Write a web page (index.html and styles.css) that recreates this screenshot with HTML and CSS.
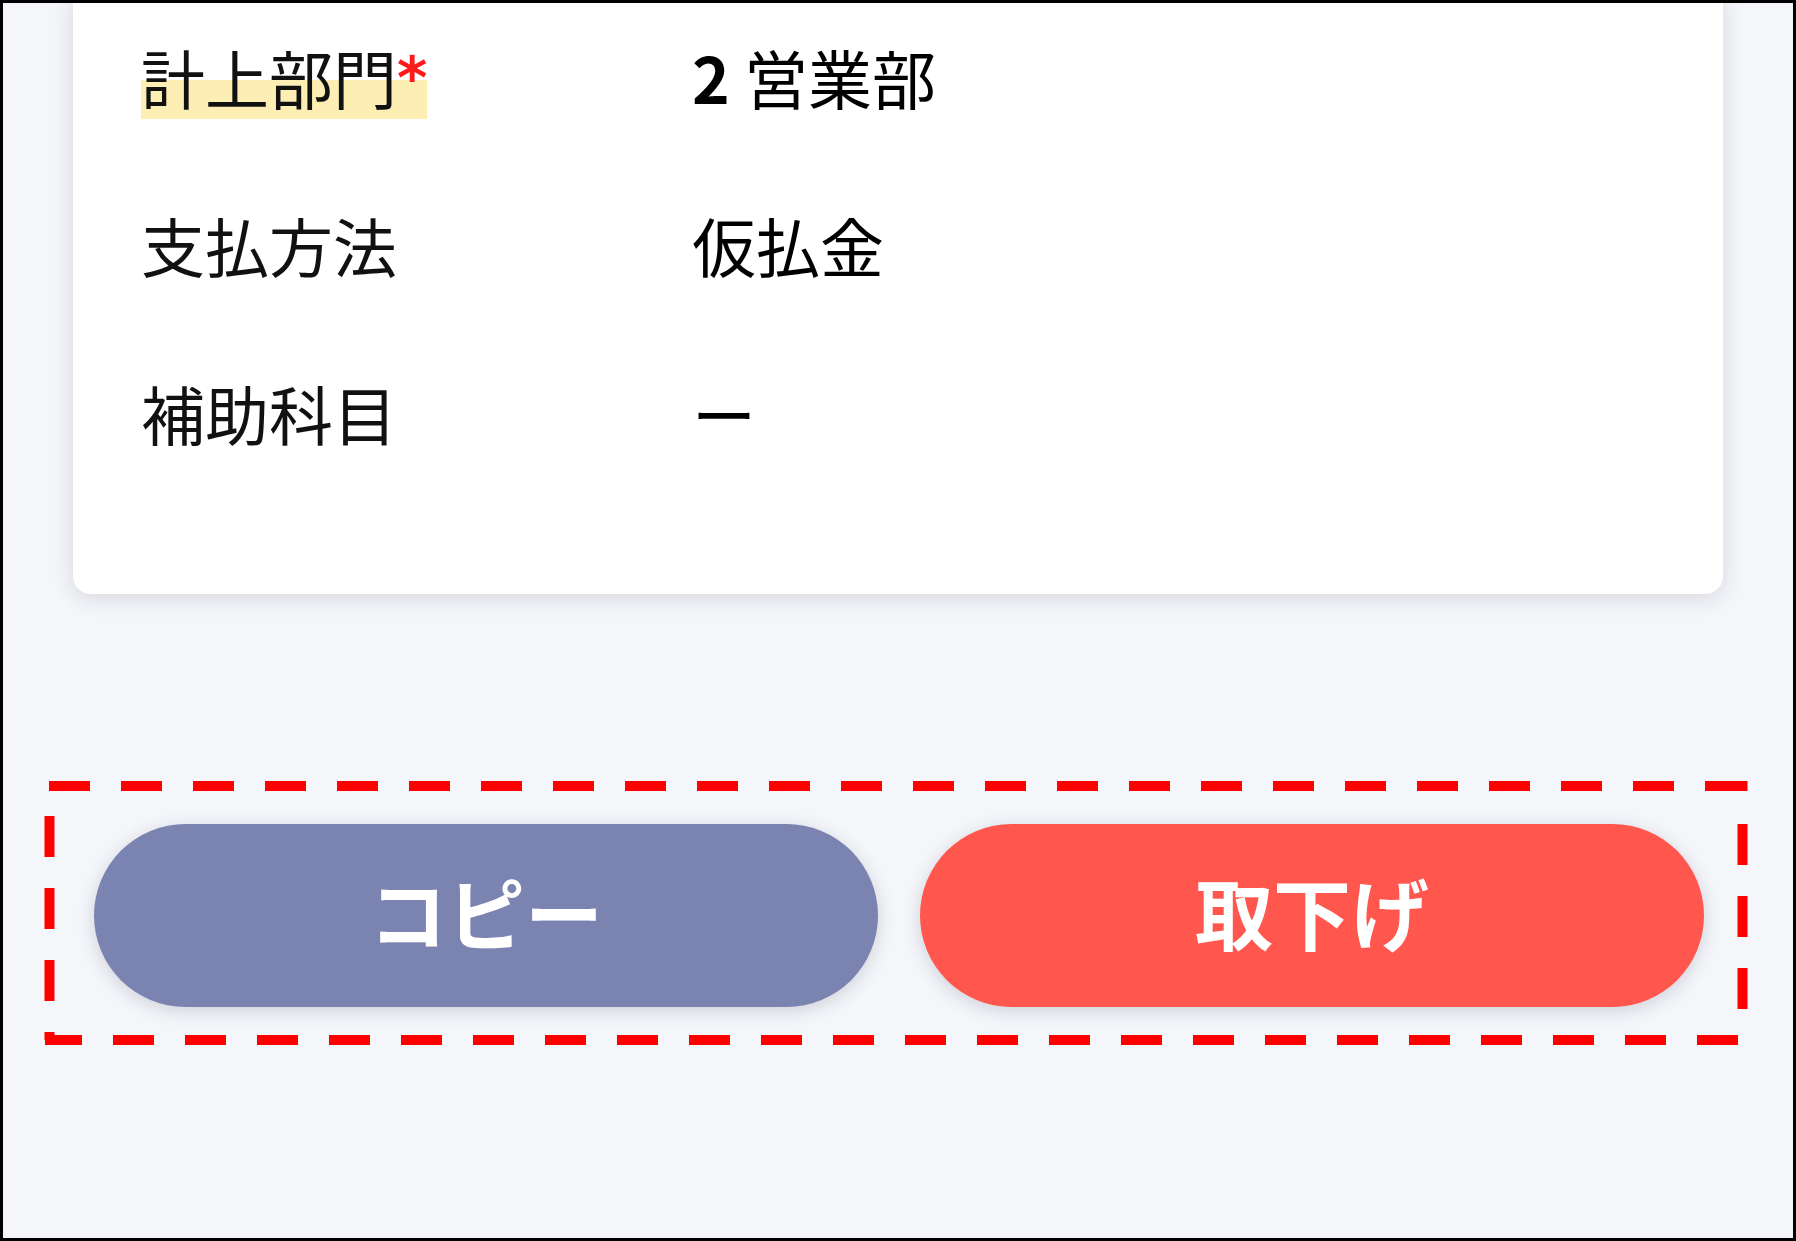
FILE: index.html
```html
<!DOCTYPE html>
<html lang="ja">
<head>
<meta charset="utf-8">
<title>詳細</title>
<link rel="stylesheet" href="styles.css">
</head>
<body>
<div class="frame">
  <section class="card">
    <div class="row">
      <div class="label"><span class="marker">計上部門<span class="req">*</span></span></div>
      <div class="value"><span class="code">2</span> 営業部</div>
    </div>
    <div class="row">
      <div class="label">支払方法</div>
      <div class="value">仮払金</div>
    </div>
    <div class="row">
      <div class="label">補助科目</div>
      <div class="value">ー</div>
    </div>
  </section>

  <div class="actions">
    <button class="btn btn-copy" type="button">コピー</button>
    <button class="btn btn-withdraw" type="button">取下げ</button>
  </div>

  <svg class="annotation" viewBox="0 0 1796 1241" width="1796" height="1241" aria-hidden="true">
    <g stroke="#ff0000" stroke-width="10" fill="none">
      <line x1="49" y1="786" x2="1747" y2="786" stroke-dasharray="41 31"/>
      <line x1="1742.5" y1="781" x2="1742.5" y2="791"/>
      <line x1="1742.5" y1="824" x2="1742.5" y2="1010" stroke-dasharray="41 31"/>
      <line x1="45" y1="1040" x2="1744" y2="1040" stroke-dasharray="41 31" stroke-dashoffset="4"/>
      <line x1="49.5" y1="816" x2="49.5" y2="1002" stroke-dasharray="41 31"/>
      <line x1="49.5" y1="1032" x2="49.5" y2="1040"/>
    </g>
  </svg>
</div>
</body>
</html>
```

FILE: styles.css
```css
* {
  box-sizing: border-box;
}

html, body {
  margin: 0;
  padding: 0;
}

body {
  width: 1796px;
  height: 1241px;
  overflow: hidden;
  font-family: "Noto Sans CJK JP", "Noto Sans", sans-serif;
  background: #ffffff;
}

.frame {
  position: relative;
  width: 1796px;
  height: 1241px;
  border: 3px solid #000000;
  background: #f5f6fa;
  overflow: hidden;
}

.card {
  margin: -11px 70px 0 70px;
  padding: 0 68px 98px 68px;
  background: #ffffff;
  border-radius: 0 0 18px 18px;
  box-shadow: 0 4px 22px rgba(30, 35, 60, 0.14);
}

.row {
  display: grid;
  grid-template-columns: 551px 1fr;
  height: 168px;
  line-height: 168px;
  font-size: 64px;
  color: #111111;
}

.label {
  white-space: nowrap;
}

.marker {
  background: linear-gradient(to bottom,
    transparent 54%,
    #fdefb3 54%,
    #fdefb3 97%,
    transparent 97%);
}

.req {
  color: #ff1a1a;
  font-family: "DejaVu Sans", sans-serif;
  font-weight: 700;
  font-size: 58px;
  vertical-align: 6px;
}

.value {
  color: #000000;
  white-space: nowrap;
}

.code {
  font-weight: 700;
}

.actions {
  display: flex;
  gap: 42px;
  padding: 0 89px 0 91px;
  margin-top: 230px;
}

.btn {
  flex: 1;
  height: 183px;
  border: none;
  border-radius: 92px;
  font-family: "Noto Sans CJK JP", "Noto Sans", sans-serif;
  font-size: 78px;
  font-weight: 700;
  color: #ffffff;
  box-shadow: 0 4px 18px rgba(40, 45, 70, 0.18);
  padding: 0 0 10px 0;
}

.btn-copy {
  background: #7b84b0;
}

.btn-withdraw {
  background: #ff574d;
}

.annotation {
  position: absolute;
  left: -3px;
  top: -3px;
  pointer-events: none;
}
```
